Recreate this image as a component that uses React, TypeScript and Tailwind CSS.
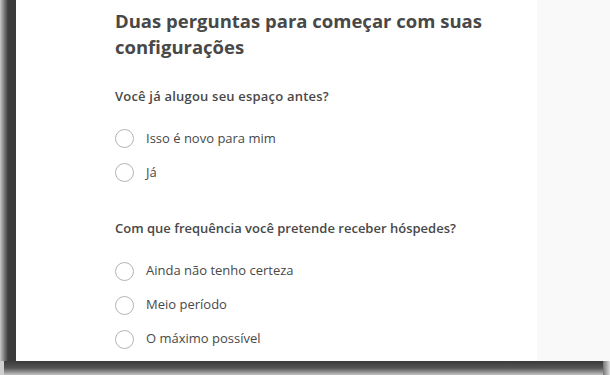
import React from 'react';

const font = { fontFamily: '"Open Sans", "Noto Sans", sans-serif' };

function Radio({ label }: { label: string }) {
  return (
    <label className="flex items-center h-[34px] cursor-pointer">
      <span className="w-[19px] h-[19px] rounded-full border border-[#b4b4b4] bg-white" />
      <span className="ml-[12px] text-[13px] text-[#484848]">{label}</span>
    </label>
  );
}

export default function App() {
  return (
    <div className="w-[610px] h-[375px] overflow-hidden flex flex-col bg-[#bdbdbd]" style={font}>
      <div className="flex flex-1 min-h-0">
        <div className="w-[16px] bg-gradient-to-r from-[#c9c9c9] via-[#3d3d3d] to-[#3a3a3a]" />
        <div className="flex-1 bg-white pl-[99px] pt-[8px]">
          <h1 className="text-[18.5px] leading-[26px] font-bold text-[#484848]">
            Duas perguntas para começar com suas configurações
          </h1>
          <p className="mt-[27px] text-[13px] font-semibold text-[#484848] tracking-[0.2px]">
            Você já alugou seu espaço antes?
          </p>
          <div className="mt-[15px]">
            <Radio label="Isso é novo para mim" />
            <Radio label="Já" />
          </div>
          <p className="mt-[29px] text-[13px] font-semibold text-[#484848]">
            Com que frequência você pretende receber hóspedes?
          </p>
          <div className="mt-[16px]">
            <Radio label="Ainda não tenho certeza" />
            <Radio label="Meio período" />
            <Radio label="O máximo possível" />
          </div>
        </div>
        <div className="w-[73px] bg-[#f9f9f9]" />
      </div>
      <div className="h-[14px] flex">
        <div className="w-[4px] bg-[#cfcfcf]" />
        <div className="flex-1 bg-gradient-to-b from-[#3a3a3a] via-[#555] to-[#c4c4c4]" />
        <div className="w-[7px] bg-gradient-to-r from-[#777] to-[#dcdcdc]" />
      </div>
    </div>
  );
}
